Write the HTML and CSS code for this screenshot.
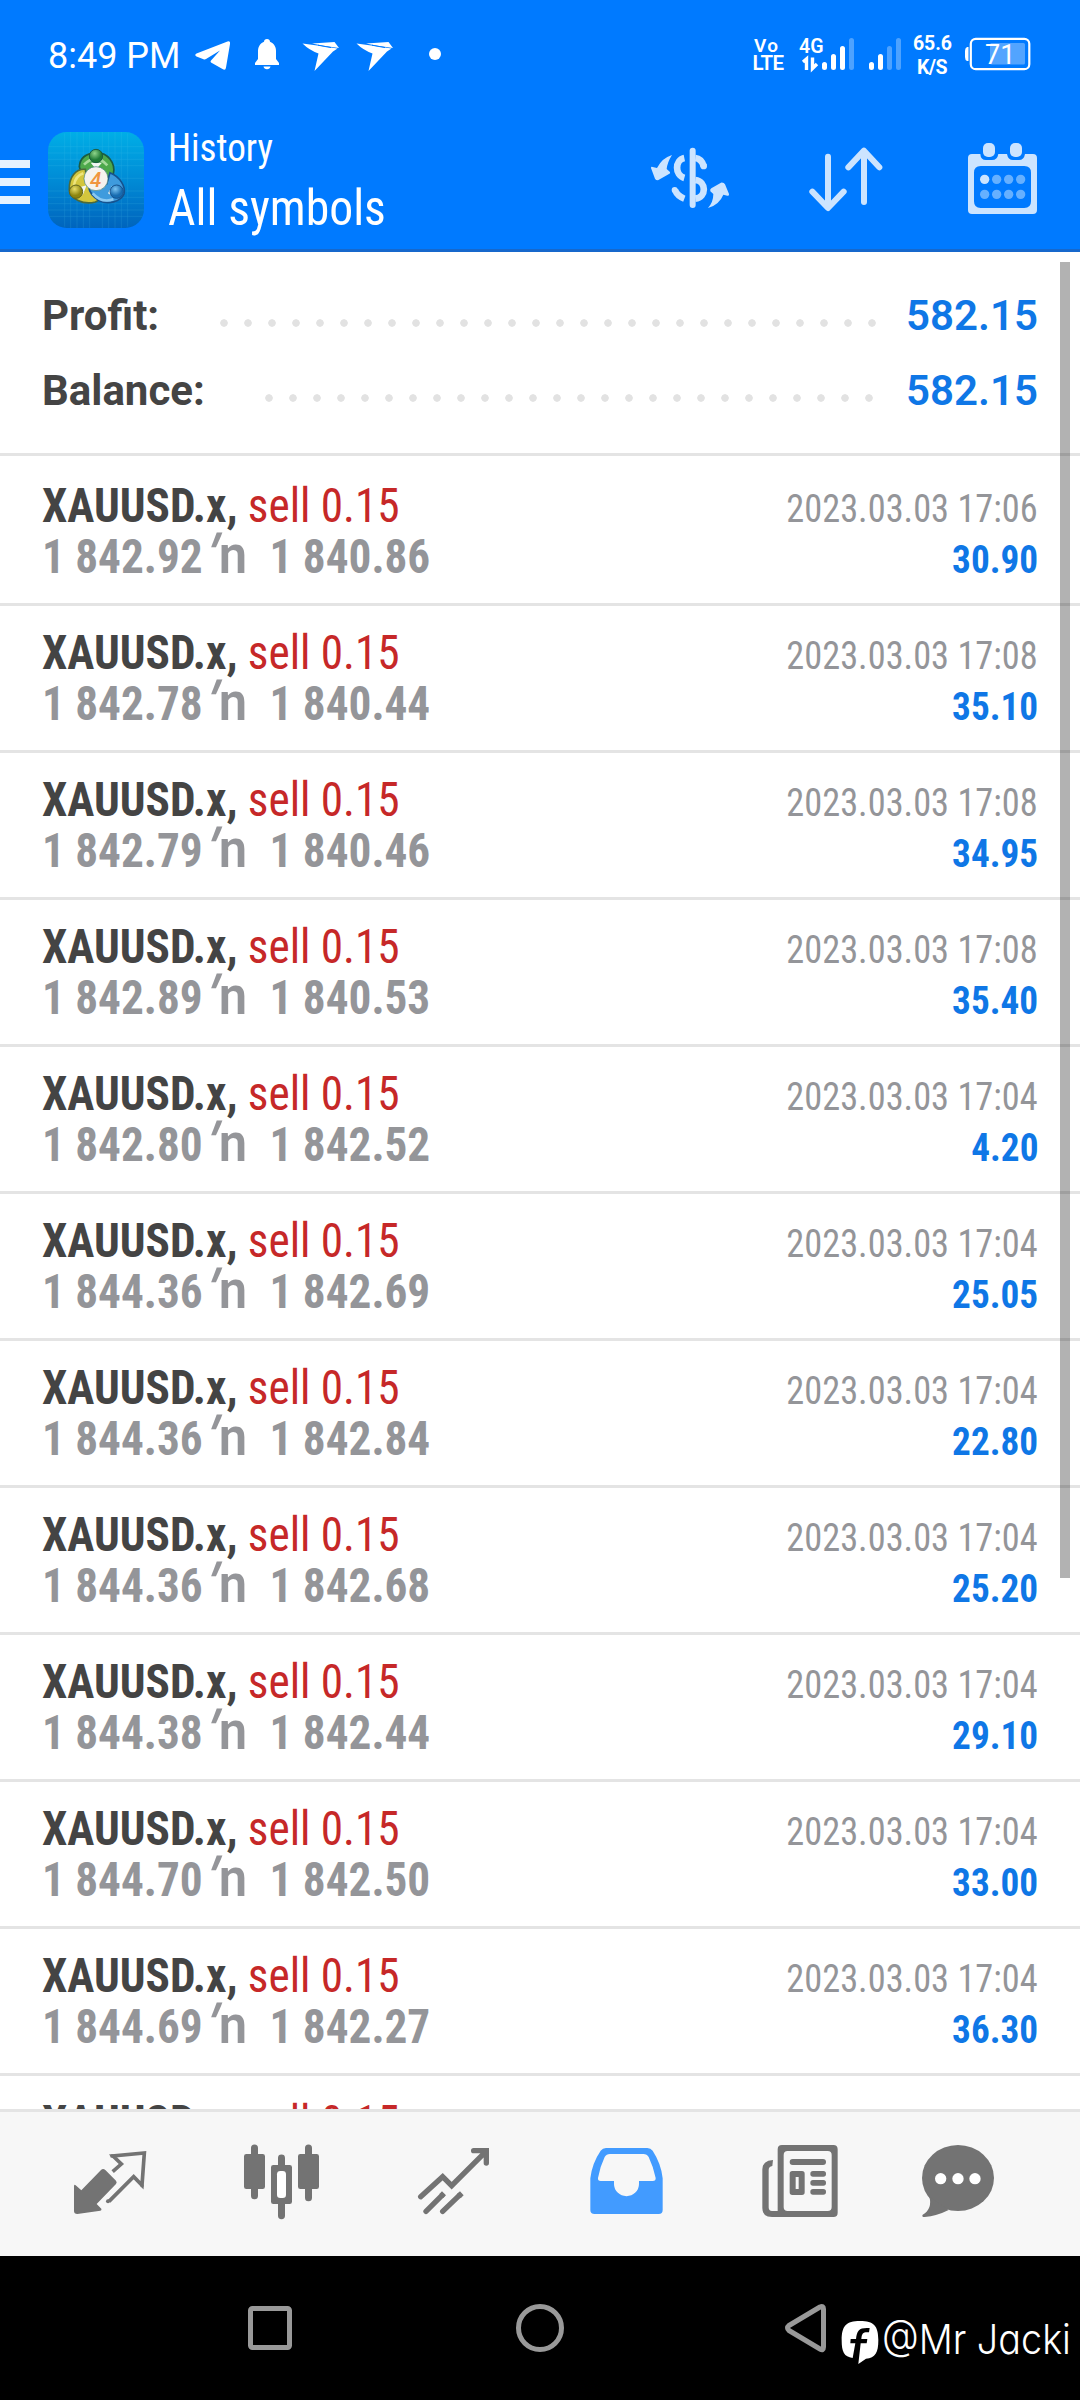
FILE: index.html
```html
<!DOCTYPE html>
<html lang="en">
<head>
<meta charset="utf-8">
<title>History</title>
<link rel="stylesheet" href="styles.css">
</head>
<body>
<header class="top">
  <div class="status">
    <span class="clock">8:49 PM</span>
    <svg class="status-left" viewBox="190 30 260 50" fill="#fff">
      <path d="M196.500 53.500 L227.500 41.500 Q230.500 40.500 230 44 L226 67.500 Q225.500 71 222.500 69 L211 62.500 Q210 61.500 211 60.500 L220 50.500 L206 59 Q205 59.800 203.500 59.200 L196.500 56.500 Q194 55 196.500 53.500 Z"/>
      <path d="M267 39 a3 3 0 0 1 3 2.800 C274 43.500 276 47 276 51 V59 L279 63 V65 H255 V63 L258 59 V51 C258 47 260 43.500 264 41.800 A3 3 0 0 1 267 39 Z M263.500 66.500 H270.500 A3.600 3.600 0 0 1 263.500 66.500 Z"/>
      <g id="bird"><path d="M302.500 43.500 L321 46 L337.500 48.500 L333 51.500 L314.500 71 L318.500 53.500 Q309 50 302.500 43.500 Z"/><path d="M312 43.600 L334.500 42 L339 48 L322 45.500 Z"/><path d="M318 45.200 L331 47.600" stroke="#007aff" stroke-width="1" fill="none"/></g>
      <use href="#bird" x="54"/>
      <circle cx="435" cy="54" r="6"/>
    </svg>
    <svg class="status-right" viewBox="745 25 300 60" fill="#fff">
      <g font-family="Roboto, sans-serif" font-weight="600">
        <text x="754" y="52" font-size="19" textLength="24">Vo</text>
        <text x="752.500" y="70" font-size="20.500" textLength="31.500">LTE</text>
        <text x="799" y="53" font-size="21" textLength="24.500" lengthAdjust="spacingAndGlyphs">4G</text>
        <text x="913" y="50.300" font-size="19.500" textLength="39" font-weight="700">65.6</text>
        <text x="917" y="73.500" font-size="19.500" textLength="30.500" font-weight="700">K/S</text>
      </g>
      <path d="M806.500 70 V59 L803 62 M812.500 57.500 V68.500 L817 64" fill="none" stroke="#fff" stroke-width="3.400"/>
      <g stroke="#fff" stroke-width="5" stroke-linecap="round">
        <path d="M824.500 64.500 V67.500 M833.500 56.500 V67.500 M842.500 48.500 V67.500 M871.500 64.500 V67.500 M880.500 56.500 V67.500"/>
        <path d="M851.500 40.500 V67.500 M889.500 48.500 V67.500 M898.500 40.500 V67.500" opacity=".3"/>
      </g>
      <rect x="970.800" y="38.800" width="58.500" height="30.400" rx="5" fill="none" stroke="#fff" stroke-width="2.200"/>
      <path d="M968.500 47 V61 H967 Q965 60 965 57 V51 Q965 48 967 47 Z"/>
      <rect x="990" y="43" width="35" height="21.500" rx="1.500" opacity=".32"/>
      <text x="985" y="63.500" font-size="27" font-family="Roboto, sans-serif">71</text>
    </svg>
  </div>
  <div class="appbar">
    <div class="menu"><i></i><i></i><i></i></div>
    <svg class="logo" viewBox="54 66 288 288">
      <defs>
        <linearGradient id="bg" x1="0" y1="0" x2="0" y2="1"><stop offset="0" stop-color="#00aee6"/><stop offset=".5" stop-color="#008bd6"/><stop offset="1" stop-color="#0064bd"/></linearGradient>
        <radialGradient id="gg" cx=".4" cy=".3"><stop offset="0" stop-color="#8ed48a"/><stop offset="1" stop-color="#1f7a35"/></radialGradient>
        <radialGradient id="gy" cx=".4" cy=".3"><stop offset="0" stop-color="#eadf6a"/><stop offset="1" stop-color="#8d8510"/></radialGradient>
        <radialGradient id="gb" cx=".4" cy=".3"><stop offset="0" stop-color="#7cc4f2"/><stop offset="1" stop-color="#176bb0"/></radialGradient>
      </defs>
      <rect x="54" y="66" width="288" height="288" rx="56" fill="url(#bg)"/>
      <path d="M104 70V350M122 66V354M141 66V354M160 66V354M179 66V354M217 66V354M236 66V354M255 66V354M274 66V354M293 70V350M56 110H340M54 129H342M54 148H342M54 167H342M54 205H342M54 243H342M54 262H342M54 281H342M54 300H342M58 319H338" stroke="#5fd0ee" stroke-width="1.500" opacity=".28"/>
      <g stroke-width="5">
        <path d="M198 128 C232 126 258 160 250 192 C246 214 232 218 222 222 L180 205 C160 190 148 180 148 170 C150 142 172 130 198 128 Z" fill="#4da94b" stroke="#1b5c42"/>
        <path d="M166 178 C138 176 116 200 118 240 C120 266 160 286 196 276 C206 272 210 266 206 256 L172 220 Z" fill="#d3c63d" stroke="#4d6a3a"/>
        <path d="M240 188 C270 200 288 230 282 252 C272 276 234 284 208 272 C190 262 178 248 176 230 L230 222 Z" fill="#3f9bdd" stroke="#15528f"/>
      </g>
      <path d="M162 164 Q198 128 232 166" stroke="#a5d99b" stroke-width="8" fill="none"/>
      <path d="M132 226 Q136 198 160 190" stroke="#eee57d" stroke-width="8" fill="none"/>
      <path d="M188 250 Q214 280 250 268" stroke="#8bc9f2" stroke-width="8" fill="none"/>
      <path d="M182 158 L198 178 L216 158 Z M148 232 L170 226 L158 256 Z M246 228 L234 250 L252 262 Z" fill="#f2f7f3"/>
      <circle cx="198" cy="138" r="20" fill="url(#gg)" stroke="#1b5c42" stroke-width="3"/>
      <circle cx="138" cy="245" r="20" fill="url(#gy)" stroke="#5f6420" stroke-width="3"/>
      <circle cx="260" cy="245" r="20" fill="url(#gb)" stroke="#15528f" stroke-width="3"/>
      <circle cx="198" cy="206" r="36" fill="#f5f2ee" stroke="#3e7f78" stroke-width="2"/>
      <text x="197" y="230" font-family="Roboto, sans-serif" font-style="italic" font-weight="500" font-size="62" text-anchor="middle" fill="#f0953f">4</text>
    </svg>
    <div class="titles">
      <div class="title-small">History</div>
      <div class="title-big">All symbols</div>
    </div>
    <svg class="actions" viewBox="0 0 420 110">
      <g transform="scale(.33333)" fill="none" stroke="#cce4ff" stroke-linecap="round" stroke-linejoin="round">
        <path d="M158 62 V225" stroke-width="18"/>
        <path d="M133 84 C104 90 104 136 133 144" stroke-width="20" stroke-linecap="butt"/>
        <path d="M105 180 Q112 198 133 206" stroke-width="19" stroke-linecap="butt"/>
        <circle cx="104" cy="180" r="9" fill="#cce4ff" stroke="none"/>
        <path d="M166 84 Q184 86 191 108" stroke-width="20" stroke-linecap="butt"/>
        <circle cx="191" cy="108" r="10" fill="#cce4ff" stroke="none"/>
        <path d="M166 150 C200 154 200 202 166 206" stroke-width="20" stroke-linecap="butt"/>
        <path d="M96 75 Q82 97 80 117 L90 126 Q92 130 87 132 L54 151 Q47 151 45 146 L33 114 Q33 108 38 111 L51 114 Q66 84 96 75 Z" fill="#cce4ff" stroke="none"/>
        <path d="M204 234 Q220 216 220 192 L211 184 Q209 178 214 175 L243 158 Q252 157 255 163 L267 192 Q268 199 262 197 L250 194 Q238 224 204 234 Z" fill="#cce4ff" stroke="none"/>
        <path d="M564 80 V233 M517 185 L564 234 L611 185 M672 216 V64 M625 112 L672 62 L718 112" stroke-width="18"/>
        <g stroke="none" fill="#cce4ff">
          <path fill-rule="evenodd" d="M996 72 H1021 Q1022 90 1038 90 H1056 Q1072 90 1075 72 H1101 Q1104 90 1119 90 H1137 Q1152 90 1155 72 H1179 Q1191 72 1191 84 V240 Q1191 252 1179 252 H996 Q984 252 984 240 V84 Q984 72 996 72 Z M1022 108 Q1002 108 1002 128 V214 Q1002 234 1022 234 H1153 Q1173 234 1173 214 V128 Q1173 108 1153 108 Z"/>
          <rect x="1029" y="39" width="36" height="42" rx="15"/><rect x="1110" y="39" width="36" height="42" rx="15"/>
          <circle cx="1034" cy="148" r="14"/>
          <g fill="#66b0ff"><circle cx="1070" cy="148" r="14"/><circle cx="1106" cy="148" r="14"/><circle cx="1142" cy="148" r="14"/><circle cx="1034" cy="193" r="14"/><circle cx="1070" cy="193" r="14"/><circle cx="1106" cy="193" r="14"/><circle cx="1142" cy="193" r="14"/></g>
        </g>
      </g>
    </svg>
  </div>
</header>
<main class="content">
  <section class="summary">
    <div class="sum"><span>Profit:</span><i class="dots profit"></i><b>582.15</b></div>
    <div class="sum"><span>Balance:</span><i class="dots balance"></i><b>582.15</b></div>
  </section>
  <section class="list">
    <div class="row"><div class="line"><span class="deal"><span class="sym">XAUUSD.x,</span><span class="op">sell 0.15</span></span><span class="date">2023.03.03 17:06</span></div><div class="line"><span class="prices"><span>1 842.92</span><span class="arr"><i>′</i>n</span><span>1 840.86</span></span><span class="gain">30.90</span></div></div>
    <div class="row"><div class="line"><span class="deal"><span class="sym">XAUUSD.x,</span><span class="op">sell 0.15</span></span><span class="date">2023.03.03 17:08</span></div><div class="line"><span class="prices"><span>1 842.78</span><span class="arr"><i>′</i>n</span><span>1 840.44</span></span><span class="gain">35.10</span></div></div>
    <div class="row"><div class="line"><span class="deal"><span class="sym">XAUUSD.x,</span><span class="op">sell 0.15</span></span><span class="date">2023.03.03 17:08</span></div><div class="line"><span class="prices"><span>1 842.79</span><span class="arr"><i>′</i>n</span><span>1 840.46</span></span><span class="gain">34.95</span></div></div>
    <div class="row"><div class="line"><span class="deal"><span class="sym">XAUUSD.x,</span><span class="op">sell 0.15</span></span><span class="date">2023.03.03 17:08</span></div><div class="line"><span class="prices"><span>1 842.89</span><span class="arr"><i>′</i>n</span><span>1 840.53</span></span><span class="gain">35.40</span></div></div>
    <div class="row"><div class="line"><span class="deal"><span class="sym">XAUUSD.x,</span><span class="op">sell 0.15</span></span><span class="date">2023.03.03 17:04</span></div><div class="line"><span class="prices"><span>1 842.80</span><span class="arr"><i>′</i>n</span><span>1 842.52</span></span><span class="gain">4.20</span></div></div>
    <div class="row"><div class="line"><span class="deal"><span class="sym">XAUUSD.x,</span><span class="op">sell 0.15</span></span><span class="date">2023.03.03 17:04</span></div><div class="line"><span class="prices"><span>1 844.36</span><span class="arr"><i>′</i>n</span><span>1 842.69</span></span><span class="gain">25.05</span></div></div>
    <div class="row"><div class="line"><span class="deal"><span class="sym">XAUUSD.x,</span><span class="op">sell 0.15</span></span><span class="date">2023.03.03 17:04</span></div><div class="line"><span class="prices"><span>1 844.36</span><span class="arr"><i>′</i>n</span><span>1 842.84</span></span><span class="gain">22.80</span></div></div>
    <div class="row"><div class="line"><span class="deal"><span class="sym">XAUUSD.x,</span><span class="op">sell 0.15</span></span><span class="date">2023.03.03 17:04</span></div><div class="line"><span class="prices"><span>1 844.36</span><span class="arr"><i>′</i>n</span><span>1 842.68</span></span><span class="gain">25.20</span></div></div>
    <div class="row"><div class="line"><span class="deal"><span class="sym">XAUUSD.x,</span><span class="op">sell 0.15</span></span><span class="date">2023.03.03 17:04</span></div><div class="line"><span class="prices"><span>1 844.38</span><span class="arr"><i>′</i>n</span><span>1 842.44</span></span><span class="gain">29.10</span></div></div>
    <div class="row"><div class="line"><span class="deal"><span class="sym">XAUUSD.x,</span><span class="op">sell 0.15</span></span><span class="date">2023.03.03 17:04</span></div><div class="line"><span class="prices"><span>1 844.70</span><span class="arr"><i>′</i>n</span><span>1 842.50</span></span><span class="gain">33.00</span></div></div>
    <div class="row"><div class="line"><span class="deal"><span class="sym">XAUUSD.x,</span><span class="op">sell 0.15</span></span><span class="date">2023.03.03 17:04</span></div><div class="line"><span class="prices"><span>1 844.69</span><span class="arr"><i>′</i>n</span><span>1 842.27</span></span><span class="gain">36.30</span></div></div>
    <div class="row"><div class="line"><span class="deal"><span class="sym">XAUUSD.x,</span><span class="op">sell 0.15</span></span></div></div>
  </section>
  <div class="scrollbar"></div>
</main>
<nav class="tabs">
  <svg viewBox="60 18 450 110"><g transform="translate(60 18) scale(.33333)" fill="#737373">
    <path d="M42 168 Q43 162 47 166 L64 181 L123 120 Q129 114 136 120 L168 152 Q172 158 168 162 L110 222 L124 236 Q126 241 121 242 L52 252 Q42 252 42 243 Z"/>
    <path d="M158 125 L184 102 L159 78 L253 69 L246 166 L221 140 L147 214" fill="none" stroke="#737373" stroke-width="11"/><circle cx="144" cy="214" r="6"/><circle cx="156" cy="78" r="5.500"/><circle cx="246" cy="167" r="5"/>
    <path d="M573 54 a10 10 0 0 1 21 0 V72 H608 Q615 72 615 79 V170 Q615 177 608 177 H594 V197 a10 10 0 0 1 -21 0 V177 H559 Q552 177 552 170 V79 Q552 72 559 72 H573 Z"/>
    <path d="M735 54 a10 10 0 0 1 21 0 V72 H770 Q777 72 777 79 V170 Q777 177 770 177 H756 V203 a10 10 0 0 1 -21 0 V177 H721 Q714 177 714 170 V79 Q714 72 721 72 H735 Z"/>
    <path d="M654 84 a10 10 0 0 1 21 0 V105 H689 Q696 105 696 112 V215 Q696 222 689 222 H675 V257 a10 10 0 0 1 -21 0 V222 H640 Q633 222 633 215 V112 Q633 105 640 105 H654 Z"/><rect x="651" y="123" width="27" height="81" rx="10" fill="#fff"/>
    <g fill="none" stroke="#737373" stroke-width="16" stroke-linecap="round"><path d="M1082 200 L1148 140 L1175 167 L1278 64 M1241 62 H1279 V99" /><path d="M1098 244 L1146 196 M1148 244 L1198 196"/></g><path d="M1146 184 L1158 196 L1150 204 L1138 192 Z M1200 184 L1211 196 L1202 205 L1190 193 Z"/>
  </g></svg>
  <svg viewBox="570 18 450 110"><g transform="translate(570 18) scale(.33333)" fill="#737373">
    <path fill="#429bff" fill-rule="evenodd" d="M108 54 H232 Q242 54 248 62 Q274 102 278 145 V240 Q278 252 266 252 H74 Q61 252 61 240 V145 Q66 100 92 62 Q98 54 108 54 Z M120 72 Q109 72 104 81 Q90 110 84 144 Q83 153 92 153 H132 V162 A37 36 0 0 0 207 162 V153 H248 Q258 153 257 144 Q250 110 236 81 Q231 72 220 72 Z"/>
    <path fill-rule="evenodd" d="M636 45 H790 Q803 45 803 58 V248 Q803 261 790 261 H606 Q577 261 577 234 V118 Q577 92 609 90 L607 108 Q596 109 596 120 V232 Q596 243 606 243 H623 V58 Q623 45 636 45 Z M653 63 Q641 63 641 75 V231 Q641 243 653 243 H773 Q785 243 785 231 V75 Q785 63 773 63 Z"/>
    <rect x="659" y="87" width="109" height="18" rx="9"/><rect x="721" y="123" width="47" height="17" rx="8"/><rect x="721" y="150" width="47" height="17" rx="8"/><rect x="721" y="177" width="47" height="17" rx="8"/><path fill-rule="evenodd" d="M667 123 H696 Q704 123 704 131 V187 Q704 195 696 195 H667 Q659 195 659 187 V131 Q659 123 667 123 Z M677 141 V177 H686 V141 Z"/>
    <ellipse cx="1164" cy="144" rx="108" ry="99"/><path d="M1078 200 Q1088 236 1058 254 Q1054 261 1064 261 Q1100 258 1136 240 Z"/>
    <g fill="#fff"><circle cx="1112" cy="146" r="17"/><circle cx="1164" cy="146" r="17"/><circle cx="1215" cy="146" r="17"/></g>
  </g></svg>
</nav>
<footer class="sysnav">
  <svg viewBox="0 0 1080 144" fill="none" stroke="#999" stroke-width="5" stroke-linejoin="round">
    <rect x="250.500" y="52.500" width="39" height="39" rx="2"/>
    <circle cx="540" cy="72" r="21.500"/>
    <path d="M789 69.500 L820 51 Q823.500 49.500 823.500 53 V91 Q823.500 95 820 93 L789 74.500 Q786 72 789 69.500 Z"/>
  </svg>
  <div class="mark">
    <svg viewBox="810 570 120 135"><path fill="#fff" d="M870 573 C912 573 925 588 925 630 C925 668 916 684 888 686 L865 702 L872 640 H890 L892 627 H874 C876 608 880 606 897 607 L899 594 C868 592 861 600 858 627 H842 L841 640 H856 L848 684 C822 680 815 666 815 630 C815 588 828 573 870 573 Z"/></svg>
    <span>@Mr Jacki</span>
  </div>
</footer>
</body>
</html>
```
FILE: styles.css
```css
* { box-sizing: border-box; }
body { margin: 0; width: 1080px; height: 2400px; overflow: hidden; display: flex; flex-direction: column; font-family: Roboto, sans-serif; background: #fff; }
svg { display: block; flex: none; }
i { font-style: normal; }

.top { height: 252px; background: #007aff; border-bottom: 3px solid #1668cc; color: #fff; }
.status { height: 108px; display: flex; align-items: flex-start; padding: 0 35px 0 48px; }
.clock { width: 142px; font-size: 36px; line-height: 42px; padding-top: 35px; white-space: nowrap; }
.status-left { width: 260px; height: 50px; margin-top: 30px; }
.status-right { width: 300px; height: 60px; margin: 25px 0 0 auto; }
.appbar { display: flex; align-items: flex-start; }
.menu { width: 30px; margin: 52px 18px 0 0; display: flex; flex-direction: column; gap: 10px; }
.menu i { height: 8px; background: #e6f2ff; }
.logo { width: 96px; height: 96px; margin-top: 24px; }
.titles { margin-left: 24px; width: 300px; font-family: "Roboto Condensed", Roboto, sans-serif; font-weight: 450; white-space: nowrap; transform: scaleX(.953); transform-origin: left; }
.title-small { font-size: 39px; line-height: 50px; padding-top: 15px; }
.title-big { font-size: 50px; line-height: 60px; margin-top: 5px; }
.actions { width: 420px; height: 110px; margin: 22px 20px 0 auto; }

.content { position: relative; height: 1857px; overflow: hidden; }
.summary { height: 204px; padding: 26px 43px 0 42px; border-bottom: 3px solid #e4e4e4; }
.sum { display: flex; align-items: baseline; font-size: 42px; line-height: 75px; font-weight: 700; color: #444; }
.sum b { font-weight: 640; color: #0f77e6; width: 131px; text-align: right; }
.dots { height: 11px; margin: 0 22px 0 auto; background: radial-gradient(circle, #e2e2e2 3.400px, transparent 4.100px) 0 0 / 24px 8px repeat-x; }
.profit { width: 672px; }
.balance { width: 624px; margin-right: 25px; }

.list { font-family: "Roboto Condensed", Roboto, sans-serif; }
.row { height: 147px; padding: 21px 42px 0; border-bottom: 3px solid #e4e4e4; }
.row:first-child { height: 150px; padding-top: 24px; }
.line { display: flex; align-items: baseline; justify-content: space-between; height: 51px; line-height: 51px; font-size: 48px; white-space: nowrap; }
.deal, .prices { transform: scaleX(.942); transform-origin: left; }
.date { transform: scaleX(.932); transform-origin: right; }
.gain { transform: scaleX(.955); transform-origin: right; }
.sym { font-weight: 700; color: #444; }
.op { margin-left: 11px; color: #c62828; }
.prices { font-weight: 700; color: #949599; display: flex; align-items: baseline; }
.arr { width: 71px; padding-left: 8px; font-family: Roboto, sans-serif; font-weight: 560; font-size: 54px; line-height: 40px; }
.arr i { display: inline-block; width: 9px; font-weight: 800; transform: skewX(-22deg); transform-origin: 50% 25%; }
.date { font-size: 39px; color: #949599; }
.gain { font-size: 39px; font-weight: 700; color: #0f77e6; }
.scrollbar { position: absolute; top: 10px; left: 1060px; width: 10px; height: 1316px; background: rgba(0,0,0,.3); }

.tabs { height: 147px; border-top: 3px solid #e4e4e4; background: #f7f7f7; display: flex; gap: 60px; padding: 18px 0 0 60px; }
.tabs svg { width: 450px; height: 110px; }

.sysnav { position: relative; height: 144px; background: #000; color: #fff; }
.mark { position: absolute; left: 840px; top: 64px; display: flex; }
.mark svg { width: 40px; height: 45px; }
.mark span { margin: -3px 0 0 2px; font-family: Inter, sans-serif; font-size: 41.500px; line-height: 45px; font-weight: 350; font-feature-settings: "cv11"; white-space: nowrap; transform: scaleX(.91); transform-origin: left; }
```
